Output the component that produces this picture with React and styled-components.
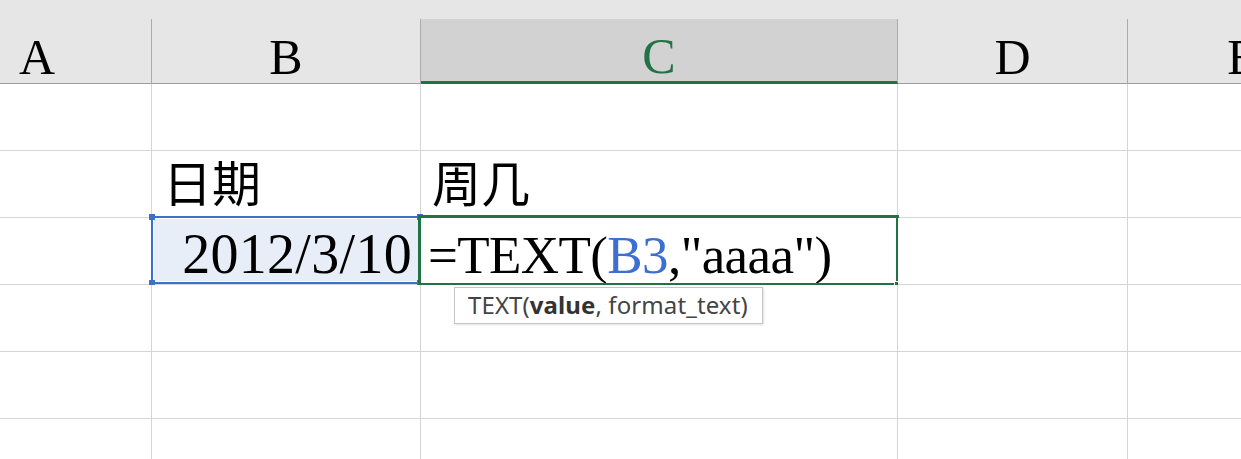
import styled, { createGlobalStyle } from "styled-components";

const GlobalStyle = createGlobalStyle`
  html, body {
    margin: 0;
    padding: 0;
    background: #ffffff;
    overflow: hidden;
  }
  * {
    box-sizing: border-box;
  }
`;

const columns = [
  { key: "A", width: 229 },
  { key: "B", width: 269 },
  { key: "C", width: 477, active: true },
  { key: "D", width: 230 },
  { key: "E", width: 230 },
];

const ROW_COUNT = 6;

function App() {
  return (
    <>
      <GlobalStyle />
      <Sheet>
        <HeaderRow>
          {columns.map((col) => (
            <HeaderCell key={col.key} $width={col.width} $active={col.active}>
              {col.key}
            </HeaderCell>
          ))}
        </HeaderRow>

        {Array.from({ length: ROW_COUNT }).map((_, i) => {
          const row = i + 1;
          return (
            <Row key={row}>
              {columns.map((col) => renderCell(col, row))}
            </Row>
          );
        })}
      </Sheet>
    </>
  );
}

function renderCell(col, row) {
  const id = col.key + row;

  if (id === "B2") {
    return (
      <Cell key={id} $width={col.width}>
        <CjkText>日期</CjkText>
      </Cell>
    );
  }
  if (id === "C2") {
    return (
      <Cell key={id} $width={col.width}>
        <CjkText>周几</CjkText>
      </Cell>
    );
  }
  if (id === "B3") {
    return (
      <Cell key={id} $width={col.width} $align="right" $selected>
        <ValueText $size={56} $spacing={0.3}>2012/3/10</ValueText>
        <RefFrame>
          <Handle $top $left />
          <Handle $top />
          <Handle $left />
          <Handle />
        </RefFrame>
      </Cell>
    );
  }
  if (id === "C3") {
    return (
      <Cell key={id} $width={col.width}>
        <ValueText $size={53} $spacing={-0.6}>
          =TEXT(<RefText>B3</RefText>,"aaaa")
        </ValueText>
        <ActiveFrame>
          <FillHandle />
        </ActiveFrame>
        <Tooltip>
          TEXT(<b>value</b>, format_text)
        </Tooltip>
      </Cell>
    );
  }
  return <Cell key={id} $width={col.width} />;
}

export default App;

const Sheet = styled.div`
  margin-left: -77px;
  width: max-content;
`;

const HeaderRow = styled.div`
  display: flex;
  padding-top: 19px;
  background: #e6e6e6;
`;

const HeaderCell = styled.div`
  width: ${(p) => p.$width}px;
  height: 65px;
  display: flex;
  align-items: flex-end;
  justify-content: center;
  padding-bottom: ${(p) => (p.$active ? 0 : 1)}px;
  border-right: 1px solid #ababab;
  border-bottom: ${(p) => (p.$active ? "3px solid #217346" : "1px solid #9e9e9e")};
  background: ${(p) => (p.$active ? "#d2d2d2" : "#e6e6e6")};
  color: ${(p) => (p.$active ? "#217346" : "#000000")};
  font-family: "Liberation Serif", "Times New Roman", serif;
  font-size: 50px;
  line-height: 1;
`;

const Row = styled.div`
  display: flex;
`;

const Cell = styled.div`
  position: relative;
  width: ${(p) => p.$width}px;
  height: 67px;
  display: flex;
  align-items: flex-end;
  justify-content: ${(p) => (p.$align === "right" ? "flex-end" : "flex-start")};
  padding: 0 8px 2px 7px;
  border-right: 1px solid #d4d4d4;
  border-bottom: 1px solid #d4d4d4;
  background: ${(p) => (p.$selected ? "#e8eef8" : "#ffffff")};
`;

const ValueText = styled.span`
  font-family: "Liberation Serif", "Times New Roman", serif;
  font-size: ${(p) => p.$size}px;
  line-height: 1;
  letter-spacing: ${(p) => p.$spacing}px;
  color: #000000;
  white-space: nowrap;
`;

const CjkText = styled.span`
  font-family: "Noto Sans CJK SC", "Noto Sans CJK JP", sans-serif;
  font-size: 49px;
  line-height: 1;
  margin-bottom: 10px;
  margin-left: 4px;
  color: #000000;
`;

const RefText = styled.span`
  color: #3c6fd1;
`;

const RefFrame = styled.div`
  position: absolute;
  top: -2px;
  left: -1px;
  right: -1px;
  bottom: 0;
  border: 2px solid #3a72c9;
  box-shadow: inset 0 0 0 1px #ffffff;
  pointer-events: none;
`;

const Handle = styled.span`
  position: absolute;
  width: 6px;
  height: 6px;
  background: #3a72c9;
  ${(p) => (p.$top ? "top: -4px;" : "bottom: -4px;")}
  ${(p) => (p.$left ? "left: -4px;" : "right: -4px;")}
`;

const ActiveFrame = styled.div`
  position: absolute;
  top: -3px;
  left: -3px;
  right: -2px;
  bottom: -2px;
  border: 3px solid #217346;
  pointer-events: none;
`;

const FillHandle = styled.span`
  position: absolute;
  right: -6px;
  bottom: -6px;
  width: 8px;
  height: 8px;
  background: #217346;
  border-left: 1px solid #ffffff;
  border-top: 1px solid #ffffff;
`;

const Tooltip = styled.div`
  position: absolute;
  top: 69px;
  left: 33px;
  z-index: 2;
  height: 37px;
  display: flex;
  align-items: center;
  padding: 0 14px 2px 13px;
  background: #ffffff;
  border: 1px solid #c6c6c6;
  box-shadow: 1px 1px 2px rgba(0, 0, 0, 0.12);
  font-family: "Noto Sans", "Open Sans", sans-serif;
  font-size: 24px;
  letter-spacing: 0.1px;
  color: #444444;
  white-space: nowrap;

  b {
    font-weight: 700;
    color: #333333;
  }
`;
